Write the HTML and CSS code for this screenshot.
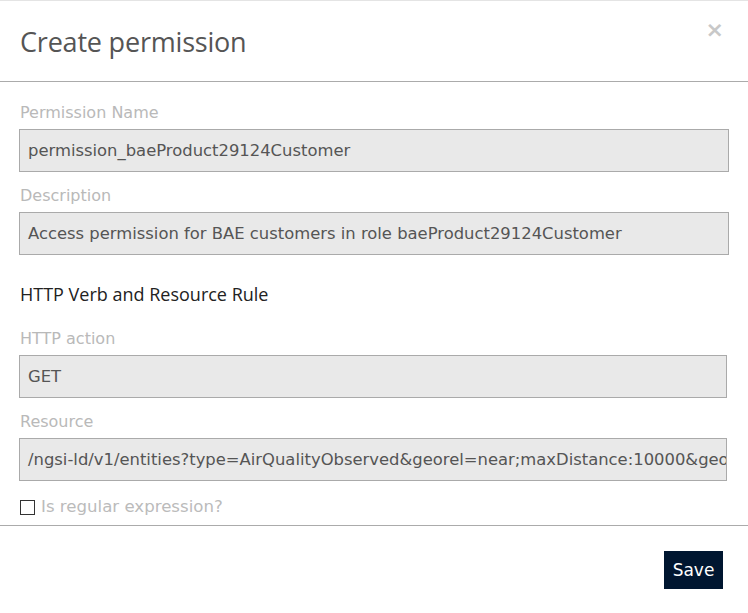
FILE: index.html
```html
<!DOCTYPE html>
<html>
<head>
<meta charset="utf-8">
<link rel="stylesheet" href="styles.css">
</head>
<body>
<div class="modal">
  <div class="modal-header">
    <h1 class="title">Create permission</h1>
    <span class="close">&#215;</span>
  </div>
  <div class="modal-body">
    <div class="group">
      <label class="label">Permission Name</label>
      <div class="field wide">permission_baeProduct29124Customer</div>
    </div>
    <div class="group">
      <label class="label">Description</label>
      <div class="field wide">Access permission for BAE customers in role baeProduct29124Customer</div>
    </div>
    <h2 class="section">HTTP Verb and Resource Rule</h2>
    <div class="group">
      <label class="label">HTTP action</label>
      <div class="field">GET</div>
    </div>
    <div class="group">
      <label class="label">Resource</label>
      <div class="field">/ngsi-ld/v1/entities?type=AirQualityObserved&amp;georel=near;maxDistance:10000&amp;geometry=Point</div>
    </div>
    <div class="check-row">
      <span class="checkbox"></span>
      <span class="check-label">Is regular expression?</span>
    </div>
  </div>
  <div class="modal-footer">
    <button class="save">Save</button>
  </div>
</div>
</body>
</html>
```
FILE: styles.css
```css
* { box-sizing: border-box; }
html, body { margin: 0; padding: 0; background: #fff; }
body { width: 748px; height: 613px; overflow: hidden; font-family: "DejaVu Sans", Verdana, sans-serif; }
.modal { border-top: 1px solid #e4e4e4; }
.modal-header {
  height: 81px;
  border-bottom: 1px solid #ababab;
  display: flex;
  align-items: flex-start;
  justify-content: space-between;
  padding: 0 24px 0 20px;
}
.title {
  margin: 23px 0 0 0;
  font-family: "Open Sans", sans-serif;
  font-weight: 400;
  font-size: 27px;
  line-height: 36px;
  color: #555;
  letter-spacing: -0.2px;
}
.close {
  margin-top: 15px;
  font-family: "DejaVu Sans", sans-serif;
  font-weight: bold;
  font-size: 22px;
  line-height: 28px;
  color: #c8c8c8;
}
.modal-body { padding: 21px 19px 0 19px; }
.group { display: flex; flex-direction: column; }
.label {
  font-size: 16px;
  line-height: 20px;
  color: #b9b9b9;
  padding-left: 1px;
  margin-bottom: 6px;
}
.field {
  height: 43px;
  margin-bottom: 14px;
  background: #e9e9e9;
  border: 1px solid #aaa;
  padding: 1px 8px 0 8px;
  font-size: 16.4px;
  line-height: 40px;
  color: #555;
  white-space: nowrap;
  overflow: hidden;
  margin-right: 2px;
}
.field.wide { margin-right: 0; }
.section {
  margin: 13px 0 23px 1px;
  font-family: "Open Sans", sans-serif;
  font-weight: 400;
  font-size: 18px;
  line-height: 24px;
  color: #222;
}
.check-row { display: flex; align-items: center; gap: 6px; padding: 2px 0 0 1px; height: 22px; }
.checkbox { width: 15px; height: 15px; border: 1px solid #333; background: #fff; }
.check-label { font-size: 16.6px; color: #bbb; line-height: 20px; }
.modal-footer {
  margin-top: 8px;
  border-top: 1px solid #ababab;
  display: flex;
  justify-content: flex-end;
  padding: 25px 25px 0 0;
}
.save {
  width: 59px;
  height: 38px;
  background: #001630;
  color: #fff;
  border: none;
  border-radius: 0;
  font-family: "DejaVu Sans", Verdana, sans-serif;
  font-size: 17px;
  padding: 0;
}
```
